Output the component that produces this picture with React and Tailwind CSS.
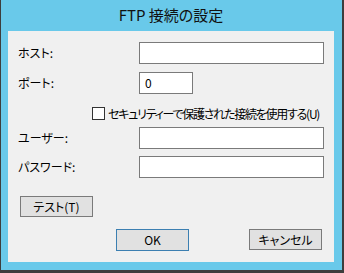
import React from "react";

const font = "font-['Noto_Sans_CJK_JP','Noto_Sans',sans-serif] [font-feature-settings:'palt']";

function Field({ label, width = "w-[186px]", value, className = "" }) {
  return (
    <div className={`flex items-center h-[22px] ${className}`}>
      <span className="w-[121px] text-[12px] leading-[16px] text-black">{label}</span>
      <div className={`${width} h-[22px] bg-white border border-[#7a7a7a] flex items-center pl-[5px] text-[12px] leading-[16px] text-black`}>
        {value}
      </div>
    </div>
  );
}

function Button({ children, def = false, className = "" }) {
  return (
    <div
      className={`w-[73px] flex items-center justify-center bg-[#e1e1e1] border text-[12px] leading-[16px] text-black ${
        def ? "border-[#3c7fb1] h-[22px]" : "border-[#7a7a7a] h-[21px]"
      } ${className}`}
    >
      {children}
    </div>
  );
}

export default function App() {
  return (
    <div className={`w-[344px] h-[273px] bg-[#3d3d3d] pl-px pr-[2px] pb-[3px] ${font}`}>
      <div className="h-full bg-[#69c9ea] flex flex-col pl-[7px] pr-[8px] pb-[8px]">
        <div className="h-[31px] flex items-center justify-center text-[15px] leading-[18px] text-[#111] pb-[1px]">
          FTP 接続の設定
        </div>
        <div className="flex-1 bg-[#f0f0f0] px-[10px] flex flex-col">
          <Field label="ホスト:" className="mt-[11px]" />
          <Field label="ポート:" width="w-[54px]" value="0" className="mt-[8px]" />
          <div className="mt-[13px] pl-[74px] flex items-center h-[13px]">
            <div className="w-[13px] h-[13px] border border-[#333] bg-white shrink-0" />
            <span className="ml-[3px] text-[12px] leading-[16px] tracking-[-1.25px] text-black whitespace-nowrap">
              セキュリティーで保護された接続を使用する(U)
            </span>
          </div>
          <Field label="ユーザー:" className="mt-[7px]" />
          <Field label="パスワード:" className="mt-[7px]" />
          <Button className="mt-[18px] ml-[2px]">テスト(T)</Button>
          <div className="mt-[12px] flex">
            <Button def className="ml-[98px]">OK</Button>
            <Button className="ml-[60px]">キャンセル</Button>
          </div>
        </div>
      </div>
    </div>
  );
}
